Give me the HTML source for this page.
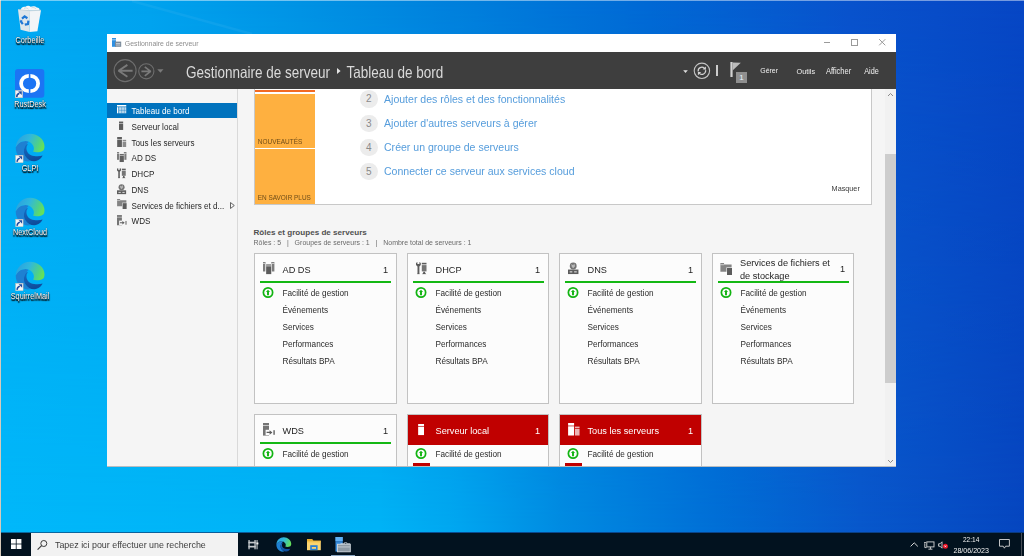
<!DOCTYPE html><html><head><meta charset="utf-8"><style>
*{margin:0;padding:0;box-sizing:border-box}
html,body{width:1024px;height:556px;overflow:hidden}
body{position:relative;font-family:"Liberation Sans",sans-serif;background:#0a74d8}
.a{position:absolute}
.t{position:absolute;white-space:nowrap;line-height:1}
svg.i{position:absolute;overflow:visible}
.dl{position:absolute;width:60px;text-align:center;color:#fff;font-size:7.3px;line-height:1;transform:scaleY(1.15);text-shadow:0 0 1px #000,0 1px 1px #000,1px 1px 1px rgba(0,0,0,.5)}
.nv{position:absolute;left:107px;width:130px;height:16px}
.nv .t{left:24.5px;top:5.5px;font-size:8.1px;color:#262626;transform:scaleY(1.08)}
.card{position:absolute;background:#fcfcfc;border:1px solid #c2c2c2;--bg:#fcfcfc}
.hd{position:absolute;left:5px;top:5px;width:131px;height:24px;border-bottom:2px solid #14b814}
.ttl{position:absolute;left:27.5px;font-size:9.2px;color:#1e1e1e;white-space:nowrap;line-height:1;transform:scaleY(1.08)}
.num{position:absolute;right:8px;font-size:9.2px;color:#1e1e1e;line-height:1;transform:scaleY(1.08)}
.it{position:absolute;left:27.5px;font-size:8.2px;color:#2a2a2a;white-space:nowrap;line-height:1;transform:scaleY(1.06)}
.circ{position:absolute;width:17.5px;height:17.5px;border-radius:50%;background:#ececec;color:#8a8a8a;font-size:10px;text-align:center;line-height:17.5px}
.lk{position:absolute;left:146px;font-size:10.55px;color:#569ddc;white-space:nowrap;line-height:1;transform:scaleY(1.1)}
</style></head><body>

<svg width="0" height="0" style="position:absolute">
<defs>
<symbol id="gc" viewBox="0 0 12 12"><circle cx="6" cy="6" r="5.05" fill="none" stroke="#12b412" stroke-width="1.9"/><path d="M6 2.9 L8.2 5.5 L7.05 5.5 L7.05 8.9 L4.95 8.9 L4.95 5.5 L3.8 5.5 Z" fill="#12b412"/></symbol>
<symbol id="ad" viewBox="0 0 12 12.5"><rect x="0" y="0" width="2.6" height="9.6" fill="currentColor" opacity=".8"/><rect x="8.4" y="0" width="3.3" height="9.6" fill="currentColor" opacity=".8"/><rect x="0" y="1.2" width="2.6" height=".6" style="fill:var(--bg)"/><rect x="8.4" y="1.2" width="3.3" height=".6" style="fill:var(--bg)"/><rect x="2.6" y="1.8" width="6.4" height="10.7" style="fill:var(--bg)"/><rect x="3.2" y="2.4" width="5.2" height="10" fill="currentColor"/><rect x="3.2" y="3.6" width="5.2" height=".7" style="fill:var(--bg)"/></symbol>
<symbol id="dh" viewBox="0 0 12 12.5"><path d="M0 0.9 L1.4 0 L1.4 2.1 L3.4 2.1 L3.4 0 L4.8 0.9 L4.8 3.1 L3.4 4.6 L3.4 11 L3.7 12.3 L1.1 12.3 L1.5 11 L1.5 4.6 L0 3.1 Z" fill="currentColor"/><rect x="5.8" y="0.8" width="4.7" height="1.6" fill="currentColor"/><rect x="5.8" y="3.1" width="4.7" height="6.3" fill="currentColor" opacity=".85"/><path d="M7.3 9.7 L9 9.7 L9.2 11 L10.4 12.3 L5.9 12.3 L7.1 11 Z" fill="currentColor"/></symbol>
<symbol id="dn" viewBox="0 0 12 12.5"><circle cx="5.6" cy="3.8" r="3.7" fill="currentColor" opacity=".85"/><path d="M3.5 1.6 L5.5 3 L6.8 1.2 L7.6 4 L5.6 6.2 L4 4.5 Z" style="fill:var(--bg)" opacity=".5"/><rect x="0" y="7.6" width="11.2" height="4.9" fill="currentColor"/><rect x="1.8" y="9.6" width="2.8" height="1" style="fill:var(--bg)"/><rect x="6.6" y="9.6" width="2.8" height="1" style="fill:var(--bg)"/></symbol>
<symbol id="fs" viewBox="0 0 12 12.5"><path d="M0 0 L3.8 0 L3.8 1.6 L11.7 1.6 L11.7 9 L0 9 Z" fill="currentColor" opacity=".75"/><rect x="0" y="1.6" width="3.8" height=".6" style="fill:var(--bg)"/><rect x="6.3" y="4.6" width="6" height="8" style="fill:var(--bg)"/><rect x="6.9" y="5.2" width="5.2" height="7.3" fill="currentColor"/></symbol>
<symbol id="wd" viewBox="0 0 12 12.8"><rect x="0" y="0" width="6" height="2.2" fill="currentColor" opacity=".85"/><rect x="0" y="2.8" width="6" height="10" fill="currentColor" opacity=".85"/><rect x="2.6" y="6.8" width="7.4" height="5.4" style="fill:var(--bg)"/><path d="M3.6 8.85 L6.6 8.85 L6.6 7.2 L9.4 9.45 L6.6 11.7 L6.6 10.05 L3.6 10.05 Z" fill="currentColor"/><rect x="10.3" y="7.2" width="1.6" height="4.6" fill="currentColor" opacity=".85"/></symbol>
<symbol id="sl" viewBox="0 0 6 11.5"><rect x="0" y="0" width="6" height="2" fill="currentColor"/><rect x="0" y="2.7" width="6" height="8.8" fill="currentColor"/></symbol>
<symbol id="ts" viewBox="0 0 11.6 12.7"><rect x="0" y="0" width="6" height="2.6" fill="currentColor"/><rect x="0" y="3.3" width="6" height="9.4" fill="currentColor"/><rect x="6.9" y="3.6" width="4.7" height="1.6" fill="currentColor" opacity=".7"/><rect x="6.9" y="5.9" width="4.7" height="6.8" fill="currentColor" opacity=".7"/></symbol>
<symbol id="tb" viewBox="0 0 9.5 8.6"><rect x="0" y="0" width="9.5" height="1.5" fill="currentColor"/><rect x="0" y="2.2" width="1.4" height="6.4" fill="currentColor"/><rect x="2.1" y="2.2" width="7.4" height="6.4" fill="currentColor" opacity=".75"/><rect x="2.1" y="4.9" width="7.4" height=".6" fill="#0072bd" opacity=".6"/><rect x="4.5" y="2.2" width=".6" height="6.4" fill="#0072bd" opacity=".6"/><rect x="6.9" y="2.2" width=".6" height="6.4" fill="#0072bd" opacity=".6"/></symbol>
</defs></svg>

<div class="a" style="left:0;top:0;width:1024px;height:532px;background:linear-gradient(to right,#00b8fa 0px,#00b3f6 380px,#00a6f0 460px,#008ce2 560px,#0072d8 700px,#0858cc 860px,#0646c0 1024px)"></div>
<div class="a" style="left:0;top:0;width:1024px;height:532px;background:linear-gradient(to right,#00a8f2 0px,#00a2ee 150px,#0092e4 300px,#0080dc 450px,#0068d4 650px,#0852cc 850px,#0646c4 1024px);-webkit-mask-image:linear-gradient(to bottom,#000 0%,rgba(0,0,0,0) 100%)"></div>
<div class="a" style="left:0;top:0;width:1px;height:556px;background:#d6cabb"></div>
<div class="a" style="left:0;top:0;width:1024px;height:1px;background:rgba(255,255,255,.45)"></div>
<svg class="i" style="left:0;top:0" width="300" height="40"><path d="M132 1 L252 34" stroke="rgba(255,255,255,.05)" stroke-width="2.5"/></svg>
<div class="a" style="left:107px;top:34px;width:789px;height:18px;background:#fff"></div>
<div class="a" style="left:107px;top:52px;width:789px;height:37px;background:#3e3e3e"></div>
<div class="a" style="left:107px;top:89px;width:130px;height:377px;background:#f5f5f5"></div>
<div class="a" style="left:107px;top:466px;width:789px;height:1px;background:#b8bcc0"></div>
<div class="a" style="left:237px;top:89px;width:1px;height:377px;background:#d9d9d9"></div>
<div class="a" style="left:885px;top:89px;width:11px;height:377px;background:#f1f1f1"></div>
<div class="a" style="left:885.2px;top:153.5px;width:10.8px;height:229.3px;background:#cdcdcd"></div>
<svg class="i" style="left:887px;top:92px" width="7" height="5"><path d="M1 4 L3.5 1.5 L6 4" fill="none" stroke="#8a8a8a" stroke-width="1"/></svg>
<svg class="i" style="left:887px;top:459px" width="7" height="5"><path d="M1 1 L3.5 3.5 L6 1" fill="none" stroke="#8a8a8a" stroke-width="1"/></svg>
<svg class="i" style="left:112px;top:38px" width="10" height="9"><rect x="0" y="0" width="4" height="1.6" fill="#2f8fe0"/><rect x="0" y="2.2" width="4" height="6.6" fill="#2f8fe0"/><rect x="3" y="3.6" width="6.2" height="5.2" fill="#7a8a9a"/><rect x="4" y="5" width="4.2" height=".8" fill="#d0d8e0"/><rect x="4" y="6.6" width="4.2" height=".8" fill="#d0d8e0"/></svg>
<div class="t" style="left:124.8px;top:40.6px;font-size:6.92px;color:#8e8e8e;transform:scaleY(1.08)">Gestionnaire de serveur</div>
<div class="a" style="left:823.7px;top:42px;width:6.4px;height:1px;background:#9a9a9a"></div>
<div class="a" style="left:851px;top:39px;width:6.6px;height:6.6px;border:1px solid #9a9a9a"></div>
<svg class="i" style="left:878.6px;top:38.8px" width="7" height="7"><path d="M0.2 0.2 L6.3 6.3 M6.3 0.2 L0.2 6.3" stroke="#9a9a9a" stroke-width="1"/></svg>
<svg class="i" style="left:113px;top:59px" width="24" height="24"><circle cx="12.1" cy="11.6" r="11" fill="none" stroke="#6e6e6e" stroke-width="1.1"/><path d="M19.6 11.8 L5.8 11.8 M14.4 5.9 L5.6 11.8 L14.4 17.7" fill="none" stroke="#7a7a7a" stroke-width="1.9" stroke-linejoin="bevel"/></svg>
<svg class="i" style="left:137.5px;top:62.5px" width="17" height="17"><circle cx="8.3" cy="8.3" r="7.6" fill="none" stroke="#6e6e6e" stroke-width="1.1"/><path d="M3.4 8.4 L12.4 8.4 M6.8 3.9 L12.6 8.4 L6.8 12.9" fill="none" stroke="#7a7a7a" stroke-width="1.7" stroke-linejoin="bevel"/></svg>
<svg class="i" style="left:156.5px;top:68.5px" width="7" height="4"><path d="M0.3 0.3 L6.5 0.3 L3.4 3.7 Z" fill="#7a7a7a"/></svg>
<div class="t" style="left:186px;top:64.5px;font-size:13.5px;color:#dadada;transform:scaleY(1.16);transform-origin:0 0">Gestionnaire de serveur</div>
<svg class="i" style="left:336.5px;top:67.6px" width="4" height="6"><path d="M0 0 L3.6 3 L0 6 Z" fill="#e4e4e4"/></svg>
<div class="t" style="left:346.5px;top:64.5px;font-size:13.5px;color:#dadada;transform:scaleY(1.16);transform-origin:0 0">Tableau de bord</div>
<svg class="i" style="left:683px;top:69.5px" width="5" height="4"><path d="M0.2 0.2 L4.8 0.2 L2.5 3 Z" fill="#e0e0e0"/></svg>
<svg class="i" style="left:693px;top:62px" width="18" height="18"><circle cx="8.9" cy="8.8" r="7.7" fill="none" stroke="#c4c4c4" stroke-width="1.1"/><path d="M5.2 9.4 A3.7 3.7 0 0 1 11.4 6.2 M12.6 8.2 A3.7 3.7 0 0 1 6.4 11.4" fill="none" stroke="#d4d4d4" stroke-width="1.2"/><path d="M12.9 4.4 L12.9 7.8 L9.6 7.3 Z M4.9 13.2 L4.9 9.8 L8.2 10.3 Z" fill="#d4d4d4"/></svg>
<div class="a" style="left:716px;top:65px;width:2px;height:11px;background:#cccccc"></div>
<svg class="i" style="left:729.5px;top:62px" width="12" height="15"><rect x="0.4" y="0" width="2.2" height="15" fill="#d2d2d2"/><path d="M2.6 0.4 L10.8 0.8 L2.6 8.4 Z" fill="#bcbcbc"/></svg>
<div class="a" style="left:736px;top:71.7px;width:11px;height:11px;background:#8f8f8f"></div>
<div class="t" style="left:739.3px;top:73.5px;font-size:8px;color:#e8f4ff">1</div>
<div class="t" style="left:760.3px;top:67.8px;font-size:6.93px;color:#f0f0f0;transform:scaleY(1.12)">Gérer</div>
<div class="t" style="left:796.5px;top:67.8px;font-size:7.24px;color:#f0f0f0;transform:scaleY(1.12)">Outils</div>
<div class="t" style="left:825.9px;top:67.8px;font-size:7.5px;color:#f0f0f0;transform:scaleY(1.12)">Afficher</div>
<div class="t" style="left:864.2px;top:67.8px;font-size:7.29px;color:#f0f0f0;transform:scaleY(1.12)">Aide</div>
<div class="nv" style="top:102.6px;height:15.2px;background:#0072bd"><div class="t" style="color:#fff;top:5.6px">Tableau de bord</div></div>
<div class="nv" style="top:118px"><div class="t">Serveur local</div></div>
<div class="nv" style="top:134px"><div class="t">Tous les serveurs</div></div>
<div class="nv" style="top:149.7px"><div class="t">AD DS</div></div>
<div class="nv" style="top:165.5px"><div class="t">DHCP</div></div>
<div class="nv" style="top:181.2px"><div class="t">DNS</div></div>
<div class="nv" style="top:197px"><div class="t">Services de fichiers et d...</div></div>
<div class="nv" style="top:212.7px"><div class="t">WDS</div></div>
<svg class="i" style="left:116.7px;top:105.3px;color:#ffffff" width="9.5" height="8.6"><use href="#tb"/></svg>
<svg class="i" style="left:118.9px;top:121px;color:#5e5e5e" width="4.4" height="9.5"><use href="#sl"/></svg>
<svg class="i" style="left:116.8px;top:136.6px;color:#5e5e5e" width="9.5" height="10"><use href="#ts"/></svg>
<svg class="i" style="left:116.9px;top:152.2px;color:#5e5e5e;--bg:#f5f5f5" width="9.8" height="10.2"><use href="#ad"/></svg>
<svg class="i" style="left:117px;top:168px;color:#5e5e5e;--bg:#f5f5f5" width="10" height="10.4"><use href="#dh"/></svg>
<svg class="i" style="left:117px;top:183.6px;color:#5e5e5e;--bg:#f5f5f5" width="9.8" height="10.4"><use href="#dn"/></svg>
<svg class="i" style="left:116.9px;top:199.3px;color:#5e5e5e;--bg:#f5f5f5" width="9.8" height="10"><use href="#fs"/></svg>
<svg class="i" style="left:116.9px;top:214.8px;color:#5e5e5e;--bg:#f5f5f5" width="9.8" height="10.6"><use href="#wd"/></svg>
<svg class="i" style="left:230px;top:201.5px" width="5" height="7"><path d="M0.5 0.5 L4.3 3.5 L0.5 6.5 Z" fill="none" stroke="#555" stroke-width=".9"/></svg>
<div class="a" style="left:238px;top:89px;width:647px;height:377px;background:#f5f5f5;overflow:hidden">
<div class="a" style="left:16px;top:-40px;width:618px;height:156px;background:#fff;border:1px solid #c8c8c8;border-top:none"></div>
<div class="a" style="left:17px;top:1px;width:60px;height:2px;background:#f26a23"></div>
<div class="a" style="left:17px;top:5px;width:60px;height:54px;background:#feb040"></div>
<div class="a" style="left:17px;top:60px;width:60px;height:55px;background:#feb040"></div>
<div class="t" style="left:19.8px;top:50.3px;font-size:6.47px;color:#6e4c18;transform:scaleY(1.1)">NOUVEAUTÉS</div>
<div class="t" style="left:19.8px;top:106px;font-size:6.43px;color:#6e4c18;transform:scaleY(1.1)">EN SAVOIR PLUS</div>
<div class="circ" style="left:122px;top:1.05px">2</div>
<div class="circ" style="left:122px;top:25.55px">3</div>
<div class="circ" style="left:122px;top:49.75px">4</div>
<div class="circ" style="left:122px;top:73.85px">5</div>
<div class="lk" style="top:4.50px">Ajouter des rôles et des fonctionnalités</div>
<div class="lk" style="top:29.00px">Ajouter d'autres serveurs à gérer</div>
<div class="lk" style="top:53.20px">Créer un groupe de serveurs</div>
<div class="lk" style="top:77.30px">Connecter ce serveur aux services cloud</div>
<div class="t" style="left:593.6px;top:95.9px;font-size:7.25px;color:#3a3a3a;transform:scaleY(1.1)">Masquer</div>
<div class="t" style="left:15.5px;top:139.9px;font-size:8.1px;font-weight:bold;color:#505050">Rôles et groupes de serveurs</div>
<div class="t" style="left:15.5px;top:150px;font-size:7px;color:#6a6a6a;transform:scaleY(1.08)">Rôles : 5&nbsp;&nbsp;&nbsp;|&nbsp;&nbsp;&nbsp;Groupes de serveurs : 1&nbsp;&nbsp;&nbsp;|&nbsp;&nbsp;&nbsp;Nombre total de serveurs : 1</div>
<div class="card" style="left:16px;top:164px;width:143px;height:151px">
<div class="hd"></div>
<svg class="i" style="left:7.9px;top:8.3px;color:#5c5c5c" width="11.8" height="12.4"><use href="#ad"/></svg>
<div class="ttl" style="top:11.7px">AD DS</div><div class="num" style="top:11.7px">1</div>
<svg class="i" style="left:7.2px;top:33.2px;color:#000" width="12" height="11"><use href="#gc"/></svg>
<div class="it" style="top:36.1px">Facilité de gestion</div>
<div class="it" style="top:53.0px">Événements</div>
<div class="it" style="top:69.9px">Services</div>
<div class="it" style="top:86.8px">Performances</div>
<div class="it" style="top:103.7px">Résultats BPA</div>
</div>
<div class="card" style="left:169px;top:164px;width:142px;height:151px">
<div class="hd"></div>
<svg class="i" style="left:7.9px;top:8.3px;color:#5c5c5c" width="12" height="12.5"><use href="#dh"/></svg>
<div class="ttl" style="top:11.7px">DHCP</div><div class="num" style="top:11.7px">1</div>
<svg class="i" style="left:7.2px;top:33.2px;color:#000" width="12" height="11"><use href="#gc"/></svg>
<div class="it" style="top:36.1px">Facilité de gestion</div>
<div class="it" style="top:53.0px">Événements</div>
<div class="it" style="top:69.9px">Services</div>
<div class="it" style="top:86.8px">Performances</div>
<div class="it" style="top:103.7px">Résultats BPA</div>
</div>
<div class="card" style="left:321px;top:164px;width:143px;height:151px">
<div class="hd"></div>
<svg class="i" style="left:8.3px;top:8px;color:#5c5c5c" width="11.2" height="12.6"><use href="#dn"/></svg>
<div class="ttl" style="top:11.7px">DNS</div><div class="num" style="top:11.7px">1</div>
<svg class="i" style="left:7.2px;top:33.2px;color:#000" width="12" height="11"><use href="#gc"/></svg>
<div class="it" style="top:36.1px">Facilité de gestion</div>
<div class="it" style="top:53.0px">Événements</div>
<div class="it" style="top:69.9px">Services</div>
<div class="it" style="top:86.8px">Performances</div>
<div class="it" style="top:103.7px">Résultats BPA</div>
</div>
<div class="card" style="left:474px;top:164px;width:142px;height:151px">
<div class="hd"></div>
<svg class="i" style="left:7.1px;top:8.7px;color:#5c5c5c" width="12.3" height="12"><use href="#fs"/></svg>
<div class="ttl" style="top:3.6px;line-height:11.8px;left:27px">Services de fichiers et<br>de stockage</div><div class="num" style="top:11px">1</div>
<svg class="i" style="left:7.2px;top:33.2px;color:#000" width="12" height="11"><use href="#gc"/></svg>
<div class="it" style="top:36.1px">Facilité de gestion</div>
<div class="it" style="top:53.0px">Événements</div>
<div class="it" style="top:69.9px">Services</div>
<div class="it" style="top:86.8px">Performances</div>
<div class="it" style="top:103.7px">Résultats BPA</div>
</div>
<div class="card" style="left:16px;top:325px;width:143px;height:151px">
<div class="hd"></div>
<svg class="i" style="left:7.9px;top:8px;color:#5c5c5c" width="12" height="12.8"><use href="#wd"/></svg>
<div class="ttl" style="top:11.7px">WDS</div><div class="num" style="top:11.7px">1</div>
<svg class="i" style="left:7.2px;top:33.2px;color:#000" width="12" height="11"><use href="#gc"/></svg>
<div class="it" style="top:36.1px">Facilité de gestion</div>
<div class="it" style="top:53.0px">Événements</div>
<div class="it" style="top:69.9px">Services</div>
<div class="it" style="top:86.8px">Performances</div>
<div class="it" style="top:103.7px">Résultats BPA</div>
</div>
<div class="card" style="left:169px;top:325px;width:142px;height:151px">
<div class="a" style="left:0;top:0;width:140px;height:29.5px;background:#c00000"></div>
<svg class="i" style="left:9.8px;top:9.4px;color:#ffffff" width="6.2" height="11.3"><use href="#sl"/></svg>
<div class="ttl" style="top:12px;color:#fff">Serveur local</div><div class="num" style="top:12px;color:#fff">1</div>
<div class="a" style="left:4.5px;top:47.5px;width:17px;height:10px;background:#c00000"></div>
<svg class="i" style="left:7.2px;top:33.2px;color:#000" width="12" height="11"><use href="#gc"/></svg>
<div class="it" style="top:36.1px">Facilité de gestion</div>
<div class="it" style="top:53.0px">Événements</div>
<div class="it" style="top:69.9px">Services</div>
<div class="it" style="top:86.8px">Performances</div>
<div class="it" style="top:103.7px">Résultats BPA</div>
</div>
<div class="card" style="left:321px;top:325px;width:143px;height:151px">
<div class="a" style="left:0;top:0;width:141px;height:29.5px;background:#c00000"></div>
<svg class="i" style="left:8px;top:8px;color:#ffffff" width="11.8" height="12.7"><use href="#ts"/></svg>
<div class="ttl" style="top:12px;color:#fff">Tous les serveurs</div><div class="num" style="top:12px;color:#fff">1</div>
<div class="a" style="left:4.5px;top:47.5px;width:17px;height:10px;background:#c00000"></div>
<svg class="i" style="left:7.2px;top:33.2px;color:#000" width="12" height="11"><use href="#gc"/></svg>
<div class="it" style="top:36.1px">Facilité de gestion</div>
<div class="it" style="top:53.0px">Événements</div>
<div class="it" style="top:69.9px">Services</div>
<div class="it" style="top:86.8px">Performances</div>
<div class="it" style="top:103.7px">Résultats BPA</div>
</div>
</div>
<svg class="i" style="left:17px;top:5px" width="25" height="28"><path d="M3.5 5 C4 2.5 6 1.2 8.5 1.8 C10 0.4 12.5 0.6 13.6 1.8 C15.5 0.8 18.5 1 19.8 2.6 C21.6 2.6 22.8 3.6 22.6 5.4 L3.5 5.8 Z" fill="#f4f6f8"/><path d="M7 3.4 C8.5 2.6 10.5 3 11.5 4.2 M14.5 2.8 C16 2.2 18 2.6 19 3.8" fill="none" stroke="#b8c4cc" stroke-width=".6"/><path d="M1 4.6 L13 5.8 L12.6 27 L3.6 24.8 Z" fill="#dfe6ea"/><path d="M13 5.8 L24 5.2 L20.4 26.2 L12.6 27 Z" fill="#f2f5f7"/><path d="M1 4.6 L13 5.8 L24 5.2" fill="none" stroke="#c4ced4" stroke-width=".7"/><g fill="none" stroke="#1f78d6" stroke-width="2.2"><path d="M5 13.6 L7.6 11.4 L10.4 13.2"/><path d="M11.4 15.6 L11 19 L7.8 19.6"/><path d="M5.8 19.2 L4 16.6 L4.6 15.2"/></g></svg>
<div class="dl" style="left:0;top:37px">Corbeille</div>
<svg class="i" style="left:15px;top:69px" width="30" height="29"><rect x="0" y="0" width="29.3" height="28.8" rx="3" fill="#1c74f4"/><path d="M13.8 4.9 A9.6 9.6 0 0 0 13.8 24.1 L13.8 20.35 A5.85 5.85 0 0 1 13.8 8.65 Z" fill="#fff"/><path d="M15.4 4.9 A9.6 9.6 0 0 1 15.4 24.1 L15.4 20.35 A5.85 5.85 0 0 0 15.4 8.65 Z" fill="#fff"/><g transform="translate(0.2,21.4)"><rect x="0" y="0" width="7.5" height="7.4" fill="#f4f4f4" stroke="#c8b8a8" stroke-width=".4"/><path d="M1.6 6.6 C1.4 4.6 2.6 3.4 4.2 2.8" fill="none" stroke="#1c4aa0" stroke-width="1.5"/><path d="M3 1 L6.6 0.9 L6.5 4.5 Z" fill="#1c4aa0"/></g></svg>
<div class="dl" style="left:0;top:100.5px">RustDesk</div>
<svg class="i" style="left:14.5px;top:132.5px" width="30" height="30"><defs><linearGradient id="eg1" x1="0" y1="0.2" x2="1" y2=".5"><stop offset="0" stop-color="#2a9fe0"/><stop offset=".45" stop-color="#30b8dc"/><stop offset=".8" stop-color="#4ed08a"/><stop offset="1" stop-color="#64e05a"/></linearGradient><linearGradient id="eg2" x1="0" y1="0" x2=".3" y2="1"><stop offset="0" stop-color="#1a6cc4"/><stop offset="1" stop-color="#0e4c9c"/></linearGradient></defs><path d="M0.7 14.6 C2.4 10.8 6 8 10.6 8 C11.8 8 12.8 8.3 13.6 8.8 L11.6 11.2 C8.6 13.6 8.2 19.8 10.2 23 C11.6 25.4 13.6 27.2 16.2 28 L12.5 28.4 C6 28 0.7 22 0.7 14.6 Z" fill="#1e80d2"/><path d="M0.7 14.6 C1.2 6.5 7.4 0.7 15 0.7 C23 0.7 29.5 6.5 29.5 13.2 C29.5 16 28.8 17 27.9 17.8 C25 19.5 20.5 19.8 18 18.6 C19.2 17.2 19.2 14.6 18.2 12.8 C16.8 9.6 13.6 8 10.6 8 C6 8 2.4 10.8 0.7 14.6 Z" fill="url(#eg1)"/><path d="M11.6 11.2 C8.6 13.6 8.2 19.8 10.2 23 C12.4 26.8 16 28.4 19.6 28.2 C23.4 28 26.4 25.6 27.6 22.6 C24.5 23.6 19.5 23.6 16 22.2 C12.4 20.6 11 17 11.6 14 C11.8 12.8 12.4 12 13 11.6 C12.6 11.3 12 11.2 11.6 11.2 Z" fill="url(#eg2)"/><g transform="translate(0.6,22.3)"><rect x="0" y="0" width="7.5" height="7.4" fill="#f4f4f4" stroke="#c8b8a8" stroke-width=".4"/><path d="M1.6 6.6 C1.4 4.6 2.6 3.4 4.2 2.8" fill="none" stroke="#1c4aa0" stroke-width="1.5"/><path d="M3 1 L6.6 0.9 L6.5 4.5 Z" fill="#1c4aa0"/></g></svg>
<div class="dl" style="left:0;top:164.8px">GLPI</div>
<svg class="i" style="left:14.5px;top:196.5px" width="30" height="30"><defs><linearGradient id="eg1" x1="0" y1="0.2" x2="1" y2=".5"><stop offset="0" stop-color="#2a9fe0"/><stop offset=".45" stop-color="#30b8dc"/><stop offset=".8" stop-color="#4ed08a"/><stop offset="1" stop-color="#64e05a"/></linearGradient><linearGradient id="eg2" x1="0" y1="0" x2=".3" y2="1"><stop offset="0" stop-color="#1a6cc4"/><stop offset="1" stop-color="#0e4c9c"/></linearGradient></defs><path d="M0.7 14.6 C2.4 10.8 6 8 10.6 8 C11.8 8 12.8 8.3 13.6 8.8 L11.6 11.2 C8.6 13.6 8.2 19.8 10.2 23 C11.6 25.4 13.6 27.2 16.2 28 L12.5 28.4 C6 28 0.7 22 0.7 14.6 Z" fill="#1e80d2"/><path d="M0.7 14.6 C1.2 6.5 7.4 0.7 15 0.7 C23 0.7 29.5 6.5 29.5 13.2 C29.5 16 28.8 17 27.9 17.8 C25 19.5 20.5 19.8 18 18.6 C19.2 17.2 19.2 14.6 18.2 12.8 C16.8 9.6 13.6 8 10.6 8 C6 8 2.4 10.8 0.7 14.6 Z" fill="url(#eg1)"/><path d="M11.6 11.2 C8.6 13.6 8.2 19.8 10.2 23 C12.4 26.8 16 28.4 19.6 28.2 C23.4 28 26.4 25.6 27.6 22.6 C24.5 23.6 19.5 23.6 16 22.2 C12.4 20.6 11 17 11.6 14 C11.8 12.8 12.4 12 13 11.6 C12.6 11.3 12 11.2 11.6 11.2 Z" fill="url(#eg2)"/><g transform="translate(0.6,22.3)"><rect x="0" y="0" width="7.5" height="7.4" fill="#f4f4f4" stroke="#c8b8a8" stroke-width=".4"/><path d="M1.6 6.6 C1.4 4.6 2.6 3.4 4.2 2.8" fill="none" stroke="#1c4aa0" stroke-width="1.5"/><path d="M3 1 L6.6 0.9 L6.5 4.5 Z" fill="#1c4aa0"/></g></svg>
<div class="dl" style="left:0;top:228.8px">NextCloud</div>
<svg class="i" style="left:14.5px;top:260.5px" width="30" height="30"><defs><linearGradient id="eg1" x1="0" y1="0.2" x2="1" y2=".5"><stop offset="0" stop-color="#2a9fe0"/><stop offset=".45" stop-color="#30b8dc"/><stop offset=".8" stop-color="#4ed08a"/><stop offset="1" stop-color="#64e05a"/></linearGradient><linearGradient id="eg2" x1="0" y1="0" x2=".3" y2="1"><stop offset="0" stop-color="#1a6cc4"/><stop offset="1" stop-color="#0e4c9c"/></linearGradient></defs><path d="M0.7 14.6 C2.4 10.8 6 8 10.6 8 C11.8 8 12.8 8.3 13.6 8.8 L11.6 11.2 C8.6 13.6 8.2 19.8 10.2 23 C11.6 25.4 13.6 27.2 16.2 28 L12.5 28.4 C6 28 0.7 22 0.7 14.6 Z" fill="#1e80d2"/><path d="M0.7 14.6 C1.2 6.5 7.4 0.7 15 0.7 C23 0.7 29.5 6.5 29.5 13.2 C29.5 16 28.8 17 27.9 17.8 C25 19.5 20.5 19.8 18 18.6 C19.2 17.2 19.2 14.6 18.2 12.8 C16.8 9.6 13.6 8 10.6 8 C6 8 2.4 10.8 0.7 14.6 Z" fill="url(#eg1)"/><path d="M11.6 11.2 C8.6 13.6 8.2 19.8 10.2 23 C12.4 26.8 16 28.4 19.6 28.2 C23.4 28 26.4 25.6 27.6 22.6 C24.5 23.6 19.5 23.6 16 22.2 C12.4 20.6 11 17 11.6 14 C11.8 12.8 12.4 12 13 11.6 C12.6 11.3 12 11.2 11.6 11.2 Z" fill="url(#eg2)"/><g transform="translate(0.6,22.3)"><rect x="0" y="0" width="7.5" height="7.4" fill="#f4f4f4" stroke="#c8b8a8" stroke-width=".4"/><path d="M1.6 6.6 C1.4 4.6 2.6 3.4 4.2 2.8" fill="none" stroke="#1c4aa0" stroke-width="1.5"/><path d="M3 1 L6.6 0.9 L6.5 4.5 Z" fill="#1c4aa0"/></g></svg>
<div class="dl" style="left:0;top:292.8px">SquirrelMail</div>
<div class="a" style="left:1px;top:532px;width:1023px;height:24px;background:#02121f"></div>
<div class="a" style="left:1px;top:532px;width:1023px;height:1px;background:linear-gradient(to right,#0a6aa0,#0a4a90 50%,#0a3a80)"></div>
<svg class="i" style="left:10.8px;top:539.3px" width="11" height="10"><rect x="0" y="0" width="4.8" height="4.6" fill="#fff"/><rect x="5.6" y="0" width="4.8" height="4.6" fill="#fff"/><rect x="0" y="5.4" width="4.8" height="4.6" fill="#fff"/><rect x="5.6" y="5.4" width="4.8" height="4.6" fill="#fff"/></svg>
<div class="a" style="left:30.5px;top:532.5px;width:207.5px;height:23.5px;background:#f2f2f2"></div>
<svg class="i" style="left:37px;top:539.5px" width="11" height="10"><circle cx="6.8" cy="3.5" r="3" fill="none" stroke="#3a3a3a" stroke-width="1"/><path d="M4.6 5.7 L0.6 9.7" stroke="#3a3a3a" stroke-width="1.1"/></svg>
<div class="t" style="left:55px;top:540.6px;font-size:8.89px;color:#404040;transform:scaleY(1.08)">Tapez ici pour effectuer une recherche</div>
<svg class="i" style="left:247.5px;top:539.5px" width="11" height="10"><g fill="#c4c8cc"><rect x="0.4" y="0" width="1.3" height="9.3"/><rect x="6.4" y="0" width="1.3" height="9.3"/><rect x="0.4" y="1.7" width="7.3" height="1.7"/><rect x="0.4" y="5.8" width="7.3" height="1.7"/><rect x="8.5" y="0" width="1.1" height="9.3"/></g><rect x="8.4" y="2.5" width="2" height="1.9" fill="#f4f4f4"/></svg>
<svg class="i" style="left:275.5px;top:537px" width="16" height="16" viewBox="0 0 31 31"><defs><linearGradient id="eh1" x1="0" y1="0.2" x2="1" y2=".5"><stop offset="0" stop-color="#2a9fe0"/><stop offset=".45" stop-color="#30b8dc"/><stop offset=".8" stop-color="#4ed08a"/><stop offset="1" stop-color="#64e05a"/></linearGradient><linearGradient id="eh2" x1="0" y1="0" x2=".3" y2="1"><stop offset="0" stop-color="#1a6cc4"/><stop offset="1" stop-color="#0e4c9c"/></linearGradient></defs><path d="M0.7 14.6 C2.4 10.8 6 8 10.6 8 C11.8 8 12.8 8.3 13.6 8.8 L11.6 11.2 C8.6 13.6 8.2 19.8 10.2 23 C11.6 25.4 13.6 27.2 16.2 28 L12.5 28.4 C6 28 0.7 22 0.7 14.6 Z" fill="#1e80d2"/><path d="M0.7 14.6 C1.2 6.5 7.4 0.7 15 0.7 C23 0.7 29.5 6.5 29.5 13.2 C29.5 16 28.8 17 27.9 17.8 C25 19.5 20.5 19.8 18 18.6 C19.2 17.2 19.2 14.6 18.2 12.8 C16.8 9.6 13.6 8 10.6 8 C6 8 2.4 10.8 0.7 14.6 Z" fill="url(#eh1)"/><path d="M11.6 11.2 C8.6 13.6 8.2 19.8 10.2 23 C12.4 26.8 16 28.4 19.6 28.2 C23.4 28 26.4 25.6 27.6 22.6 C24.5 23.6 19.5 23.6 16 22.2 C12.4 20.6 11 17 11.6 14 C11.8 12.8 12.4 12 13 11.6 C12.6 11.3 12 11.2 11.6 11.2 Z" fill="url(#eh2)"/></svg>
<svg class="i" style="left:306.5px;top:538.7px" width="14" height="11.2"><path d="M0 0 L5.2 0 L6.4 1.4 L13.8 1.4 L13.8 2.4 L0 2.4 Z" fill="#e9ae2e"/><rect x="0" y="2.2" width="13.8" height="9" fill="#fcd470"/><rect x="0" y="2.2" width="13.8" height="1.2" fill="#f6c24c"/><rect x="3.2" y="6.2" width="7.4" height="5" fill="#2a7fd6"/><rect x="4.8" y="8" width="4.2" height="1.8" fill="#fcd470"/></svg>
<svg class="i" style="left:335px;top:537px" width="16" height="15.5"><rect x="0.5" y="0" width="7.2" height="14.6" fill="#3a8fe0"/><rect x="0.5" y="0" width="7.2" height="4" fill="#5fb0f4"/><rect x="0.5" y="4.6" width="7.2" height=".6" fill="#1f5f9f"/><rect x="4" y="8.2" width="1" height="1" fill="#d0d8e0"/><path d="M5.5 6.8 L9.4 6.8 L9.4 5.8 L11.8 5.8 L11.8 6.8 L15.2 6.8" fill="none" stroke="#cfd6dc" stroke-width=".9"/><rect x="2.5" y="7.3" width="12.8" height="7.5" fill="#8e9aa4" stroke="#cfd6dc" stroke-width=".9"/><rect x="2.9" y="9.6" width="12" height=".7" fill="#d6dde2"/></svg>
<div class="a" style="left:331px;top:554.8px;width:24px;height:1.2px;background:#88a4c0"></div>
<svg class="i" style="left:910px;top:542px" width="9" height="5"><path d="M0.6 4.4 L4.2 0.8 L7.8 4.4" fill="none" stroke="#d8d8d8" stroke-width="1"/></svg>
<svg class="i" style="left:923.5px;top:540.8px" width="11" height="9"><g fill="none" stroke="#d8d8d8" stroke-width=".9"><rect x="2.8" y=".9" width="7.2" height="5"/><path d="M6.4 5.9 L6.4 8 M4.4 8.2 L8.4 8.2 M0.8 2.2 L0.8 6.6 L2.6 6.6"/></g><rect x=".2" y="1" width="1.6" height="1" fill="#d8d8d8"/></svg>
<svg class="i" style="left:937.5px;top:541.3px" width="10" height="9"><path d="M0.6 2.8 L2 2.8 L4 0.8 L4 7.2 L2 5.2 L0.6 5.2 Z" fill="none" stroke="#d8d8d8" stroke-width=".9"/><circle cx="7.4" cy="5.3" r="2.5" fill="#e81123"/><path d="M6.5 4.4 L8.3 6.2 M8.3 4.4 L6.5 6.2" stroke="#fff" stroke-width=".7"/></svg>
<div class="t" style="left:963px;top:536.6px;font-size:6.51px;color:#f0f0f0;transform:scaleY(1.1)">22:14</div>
<div class="t" style="left:953.5px;top:547.7px;font-size:7.09px;color:#f0f0f0;transform:scaleY(1.1)">28/06/2023</div>
<svg class="i" style="left:998.8px;top:539.3px" width="11" height="10"><path d="M0.5 0.5 L10.4 0.5 L10.4 7.2 L6.6 7.2 L5.4 9.2 L4.2 7.2 L0.5 7.2 Z" fill="none" stroke="#d8d8d8" stroke-width=".9"/></svg>
<div class="a" style="left:1021px;top:533px;width:1px;height:23px;background:#474e56"></div>
</body></html>
